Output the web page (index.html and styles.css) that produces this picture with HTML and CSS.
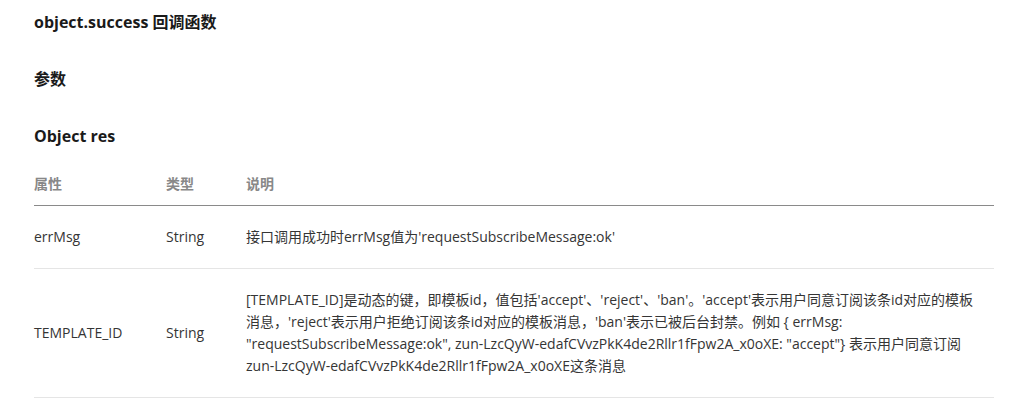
FILE: index.html
```html
<!DOCTYPE html>
<html lang="zh-CN">
<head>
<meta charset="utf-8">
<title>object.success</title>
<link rel="stylesheet" href="styles.css">
</head>
<body>
<main class="doc">
  <h3 class="heading">object.success 回调函数</h3>
  <h4 class="heading">参数</h4>
  <h5 class="heading">Object res</h5>
  <table class="params">
    <thead>
      <tr>
        <th class="col-name">属性</th>
        <th class="col-type">类型</th>
        <th class="col-desc">说明</th>
      </tr>
    </thead>
    <tbody>
      <tr>
        <td>errMsg</td>
        <td>String</td>
        <td>接口调用成功时errMsg值为'requestSubscribeMessage:ok'</td>
      </tr>
      <tr>
        <td>TEMPLATE_ID</td>
        <td>String</td>
        <td>[TEMPLATE_ID]是动态的键，即模板id，值包括'accept'、'reject'、'ban'。'accept'表示用户同意订阅该条id对应的模板消息，'reject'表示用户拒绝订阅该条id对应的模板消息，'ban'表示已被后台封禁。例如 { errMsg: "requestSubscribeMessage:ok", zun-LzcQyW-edafCVvzPkK4de2Rllr1fFpw2A_x0oXE: "accept"} 表示用户同意订阅zun-LzcQyW-edafCVvzPkK4de2Rllr1fFpw2A_x0oXE这条消息</td>
      </tr>
    </tbody>
  </table>
</main>
</body>
</html>
```

FILE: styles.css
```css
html, body {
  margin: 0;
  padding: 0;
  background: #ffffff;
}

body {
  font-family: "Open Sans", "Noto Sans CJK SC", sans-serif;
  color: #353535;
  font-size: 14px;
}

.doc {
  width: 960px;
  margin-left: 34px;
  padding-top: 10px;
}

.heading {
  margin: 0 0 33px 0;
  font-size: 16px;
  line-height: 24px;
  font-weight: 700;
  color: #1a1a1a;
}

.params {
  width: 100%;
  border-collapse: collapse;
  margin-top: -8px;
}

.params th {
  text-align: left;
  font-weight: 700;
  color: #888888;
  line-height: 22px;
  padding: 0 0 10px 0;
  border-bottom: 1px solid #8a8a8a;
}

.col-name { width: 132px; }
.col-type { width: 80px; }

.params td {
  line-height: 22px;
  padding: 20px 16px 20px 0;
  vertical-align: middle;
  border-bottom: 1px solid #e5e5e5;
}
```
